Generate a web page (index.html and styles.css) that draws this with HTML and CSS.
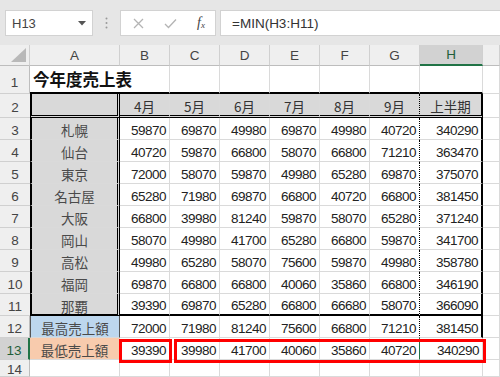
FILE: index.html
```html
<!DOCTYPE html>
<html lang="ja">
<head>
    <meta charset="UTF-8">
    <title>今年度売上表</title>
    <link rel="stylesheet" href="styles.css">
</head>
<body>
    <div class="topbar">
        <div class="namebox">
            <span>H13</span>
            <svg class="drop" width="8" height="5" viewBox="0 0 8 5"><path d="M0 0H8L4 4.5Z" fill="#555"/></svg>
        </div>
        <div class="grip">
            <svg width="3" height="12" viewBox="0 0 3 12"><circle cx="1.5" cy="1.5" r="1" fill="#999"/><circle cx="1.5" cy="6" r="1" fill="#999"/><circle cx="1.5" cy="10.5" r="1" fill="#999"/></svg>
        </div>
        <div class="fxbox">
            <svg width="11" height="11" viewBox="0 0 11 11"><path d="M1 1L10 10M10 1L1 10" stroke="#b4b4b4" stroke-width="1.3"/></svg>
            <svg width="13" height="11" viewBox="0 0 13 11"><path d="M1 6L4.5 9.5L12 1.5" stroke="#b4b4b4" stroke-width="1.3" fill="none"/></svg>
            <span class="fx">f<sub>x</sub></span>
        </div>
        <div class="formula">=MIN(H3:H11)</div>
    </div>

    <div class="sheet">
        <div class="row hdr">
            <div class="cell rh corner">
                <svg width="15" height="14" viewBox="0 0 15 14"><path d="M15 0V14H0Z" fill="#b9b9b9"/></svg>
            </div>
            <div class="cell ca">A</div>
            <div class="cell cn">B</div>
            <div class="cell cn">C</div>
            <div class="cell cn">D</div>
            <div class="cell cn">E</div>
            <div class="cell cn">F</div>
            <div class="cell cn">G</div>
            <div class="cell ch sel-col">H</div>
            <div class="cell ci"></div>
        </div>

        <div class="row r1">
            <div class="cell rh">1</div>
            <div class="cell ca title">今年度売上表</div>
            <div class="cell cn"></div>
            <div class="cell cn"></div>
            <div class="cell cn"></div>
            <div class="cell cn"></div>
            <div class="cell cn"></div>
            <div class="cell cn"></div>
            <div class="cell ch"></div>
            <div class="cell ci"></div>
        </div>

        <div class="row r2 tbl">
            <div class="cell rh">2</div>
            <div class="cell ca label"></div>
            <div class="cell cn mon">4月</div>
            <div class="cell cn mon">5月</div>
            <div class="cell cn mon">6月</div>
            <div class="cell cn mon">7月</div>
            <div class="cell cn mon">8月</div>
            <div class="cell cn mon last">9月</div>
            <div class="cell ch mon">上半期</div>
            <div class="cell ci"></div>
        </div>

        <div class="row tbl">
            <div class="cell rh">3</div>
            <div class="cell ca label">札幌</div>
            <div class="cell cn num">59870</div>
            <div class="cell cn num">69870</div>
            <div class="cell cn num">49980</div>
            <div class="cell cn num">69870</div>
            <div class="cell cn num">49980</div>
            <div class="cell cn num last">40720</div>
            <div class="cell ch num">340290</div>
            <div class="cell ci"></div>
        </div>

        <div class="row tbl">
            <div class="cell rh">4</div>
            <div class="cell ca label">仙台</div>
            <div class="cell cn num">40720</div>
            <div class="cell cn num">59870</div>
            <div class="cell cn num">66800</div>
            <div class="cell cn num">58070</div>
            <div class="cell cn num">66800</div>
            <div class="cell cn num last">71210</div>
            <div class="cell ch num">363470</div>
            <div class="cell ci"></div>
        </div>

        <div class="row tbl">
            <div class="cell rh">5</div>
            <div class="cell ca label">東京</div>
            <div class="cell cn num">72000</div>
            <div class="cell cn num">58070</div>
            <div class="cell cn num">59870</div>
            <div class="cell cn num">49980</div>
            <div class="cell cn num">65280</div>
            <div class="cell cn num last">69870</div>
            <div class="cell ch num">375070</div>
            <div class="cell ci"></div>
        </div>

        <div class="row tbl">
            <div class="cell rh">6</div>
            <div class="cell ca label">名古屋</div>
            <div class="cell cn num">65280</div>
            <div class="cell cn num">71980</div>
            <div class="cell cn num">69870</div>
            <div class="cell cn num">66800</div>
            <div class="cell cn num">40720</div>
            <div class="cell cn num last">66800</div>
            <div class="cell ch num">381450</div>
            <div class="cell ci"></div>
        </div>

        <div class="row tbl">
            <div class="cell rh">7</div>
            <div class="cell ca label">大阪</div>
            <div class="cell cn num">66800</div>
            <div class="cell cn num">39980</div>
            <div class="cell cn num">81240</div>
            <div class="cell cn num">59870</div>
            <div class="cell cn num">58070</div>
            <div class="cell cn num last">65280</div>
            <div class="cell ch num">371240</div>
            <div class="cell ci"></div>
        </div>

        <div class="row tbl">
            <div class="cell rh">8</div>
            <div class="cell ca label">岡山</div>
            <div class="cell cn num">58070</div>
            <div class="cell cn num">49980</div>
            <div class="cell cn num">41700</div>
            <div class="cell cn num">65280</div>
            <div class="cell cn num">66800</div>
            <div class="cell cn num last">59870</div>
            <div class="cell ch num">341700</div>
            <div class="cell ci"></div>
        </div>

        <div class="row tbl">
            <div class="cell rh">9</div>
            <div class="cell ca label">高松</div>
            <div class="cell cn num">49980</div>
            <div class="cell cn num">65280</div>
            <div class="cell cn num">58070</div>
            <div class="cell cn num">75600</div>
            <div class="cell cn num">59870</div>
            <div class="cell cn num last">49980</div>
            <div class="cell ch num">358780</div>
            <div class="cell ci"></div>
        </div>

        <div class="row tbl">
            <div class="cell rh">10</div>
            <div class="cell ca label">福岡</div>
            <div class="cell cn num">69870</div>
            <div class="cell cn num">66800</div>
            <div class="cell cn num">66800</div>
            <div class="cell cn num">40060</div>
            <div class="cell cn num">35860</div>
            <div class="cell cn num last">66800</div>
            <div class="cell ch num">346190</div>
            <div class="cell ci"></div>
        </div>

        <div class="row tbl r11">
            <div class="cell rh">11</div>
            <div class="cell ca label">那覇</div>
            <div class="cell cn num">39390</div>
            <div class="cell cn num">69870</div>
            <div class="cell cn num">65280</div>
            <div class="cell cn num">66800</div>
            <div class="cell cn num">66680</div>
            <div class="cell cn num last">58070</div>
            <div class="cell ch num">366090</div>
            <div class="cell ci"></div>
        </div>

        <div class="row r12">
            <div class="cell rh">12</div>
            <div class="cell ca label max">最高売上額</div>
            <div class="cell cn num">72000</div>
            <div class="cell cn num">71980</div>
            <div class="cell cn num">81240</div>
            <div class="cell cn num">75600</div>
            <div class="cell cn num">66800</div>
            <div class="cell cn num last">71210</div>
            <div class="cell ch num">381450</div>
            <div class="cell ci"></div>
        </div>

        <div class="row r13">
            <div class="cell rh sel-row">13</div>
            <div class="cell ca label min">最低売上額</div>
            <div class="cell cn num">39390</div>
            <div class="cell cn num">39980</div>
            <div class="cell cn num">41700</div>
            <div class="cell cn num">40060</div>
            <div class="cell cn num">35860</div>
            <div class="cell cn num active-left">40720</div>
            <div class="cell ch num">340290</div>
            <div class="cell ci"></div>
        </div>

        <div class="row r14">
            <div class="cell rh">14</div>
            <div class="cell ca"></div>
            <div class="cell cn"></div>
            <div class="cell cn"></div>
            <div class="cell cn"></div>
            <div class="cell cn"></div>
            <div class="cell cn"></div>
            <div class="cell cn"></div>
            <div class="cell ch"></div>
            <div class="cell ci"></div>
        </div>

        <!-- red marker boxes drawn over row 13 -->
        <div class="mark mark-b"></div>
        <div class="mark mark-rest"></div>
    </div>
</body>
</html>
```

FILE: styles.css
```css
body {
    margin: 0;
    width: 500px;
    height: 377px;
    overflow: hidden;
    font-family: "Liberation Sans", "Noto Sans CJK JP", sans-serif;
    color: #333;
    background-color: #fff;
}

/* formula bar */

.topbar {
    height: 45px;
    box-sizing: border-box;
    padding-top: 10px;
    display: flex;
    align-items: flex-start;
    background-color: #e6e6e6;
}

.namebox {
    margin-left: 5px;
    width: 88px;
    height: 26px;
    box-sizing: border-box;
    padding: 0 6px 0 6px;
    display: flex;
    align-items: center;
    justify-content: space-between;
    background-color: #fff;
    border: 1px solid #d2d2d2;
    font-size: 13px;
    color: #444;
}

.grip {
    width: 27px;
    height: 26px;
    display: flex;
    align-items: center;
    justify-content: center;
}

.fxbox {
    width: 96px;
    height: 26px;
    box-sizing: border-box;
    padding: 0 10px 0 12px;
    display: flex;
    align-items: center;
    justify-content: space-between;
    background-color: #fff;
    border: 1px solid #d2d2d2;
}

.fx {
    font-family: "Liberation Serif", serif;
    font-style: italic;
    font-size: 14px;
    color: #444;
}

.fx sub {
    font-size: 9px;
    vertical-align: -1px;
}

.formula {
    flex: 1;
    margin-left: 4px;
    height: 26px;
    box-sizing: border-box;
    padding-left: 11px;
    display: flex;
    align-items: center;
    background-color: #fff;
    border: 1px solid #d2d2d2;
    border-right: none;
    font-size: 13.5px;
    color: #333;
}

/* sheet grid */

.sheet {
    position: relative;
}

.row {
    display: flex;
    height: 22px;
}

.row.hdr { height: 21px; }
.row.r1 { height: 28px; }
.row.r2 { height: 24px; }
.row.r14 { height: 17px; }

.cell {
    box-sizing: border-box;
    height: 100%;
    padding-top: 3px;
    border-right: 1px solid #dadada;
    border-bottom: 1px solid #dadada;
    display: flex;
    align-items: center;
    justify-content: center;
    white-space: nowrap;
    font-size: 13px;
}

.rh {
    width: 30px;
    background-color: #efefef;
    border-right-color: #bdbdbd;
    border-bottom-color: #d0d0d0;
    color: #444;
    font-size: 13.5px;
}

.ca { width: 90px; }
.cn { width: 50px; }
.ch { width: 63px; }
.ci { flex: 1; }

.hdr .cell {
    padding-top: 0;
    background-color: #efefef;
    border-right-color: #d0d0d0;
    border-bottom-color: #bdbdbd;
    color: #444;
    font-size: 13.5px;
}

.hdr .corner {
    align-items: flex-end;
    justify-content: flex-end;
    padding: 0 3px 3px 0;
}

.hdr .sel-col {
    background-color: #d2d2d2;
    border-bottom: 2px solid #217346;
    color: #1f5f3a;
}

.rh.sel-row {
    background-color: #d2d2d2;
    border-right: 2px solid #217346;
    color: #1f5f3a;
}

/* title row */

.r1 .rh {
    padding-top: 6px;
}

.r1 .title {
    padding-top: 0;
    justify-content: flex-start;
    padding-left: 3px;
    border-right: none;
    overflow: visible;
    font-family: "Noto Sans CJK JP", sans-serif;
    font-weight: bold;
    font-size: 16.5px;
    color: #111;
}

.r1 .ca, .r1 .cn, .r1 .ch {
    border-bottom: 2px solid #000;
}

/* table body */

.tbl .ca {
    border-left: 2px solid #000;
    border-right: 3px double #000;
    background-color: #d9d9d9;
}

.tbl .rh {
    border-right: none;
}

.r2 .ca, .r2 .cn, .r2 .ch {
    background-color: #d9d9d9;
    border-bottom: 3px double #000;
}

.tbl .last, .r12 .last {
    border-right: 1px dotted #000;
}

.tbl .ch, .r12 .ch {
    border-right: 2px solid #000;
}

.r11 .ca, .r11 .cn, .r11 .ch {
    border-bottom: 2px solid #000;
}

.label {
    font-family: "Noto Sans CJK JP", sans-serif;
    font-size: 13.5px;
    color: #4a4a4a;
}

.mon {
    font-family: "Noto Sans CJK JP", sans-serif;
    font-size: 13.5px;
    color: #333;
}

.num {
    justify-content: flex-end;
    padding-right: 3px;
    font-size: 13.5px;
    letter-spacing: -0.5px;
    color: #222;
}

.max {
    background-color: #bdd7ee;
    border-left: 1px solid #555;
    border-right: 1px solid #555;
}

.min {
    background-color: #f8cbad;
}

.active-left {
    border-right: 1px solid #217346;
}

/* red marker rectangles */

.mark {
    position: absolute;
    top: 294px;
    height: 24px;
    box-sizing: border-box;
    border: 3px solid #ff0000;
}

.mark-b {
    left: 119px;
    width: 53px;
}

.mark-rest {
    left: 174px;
    width: 312px;
}
```
